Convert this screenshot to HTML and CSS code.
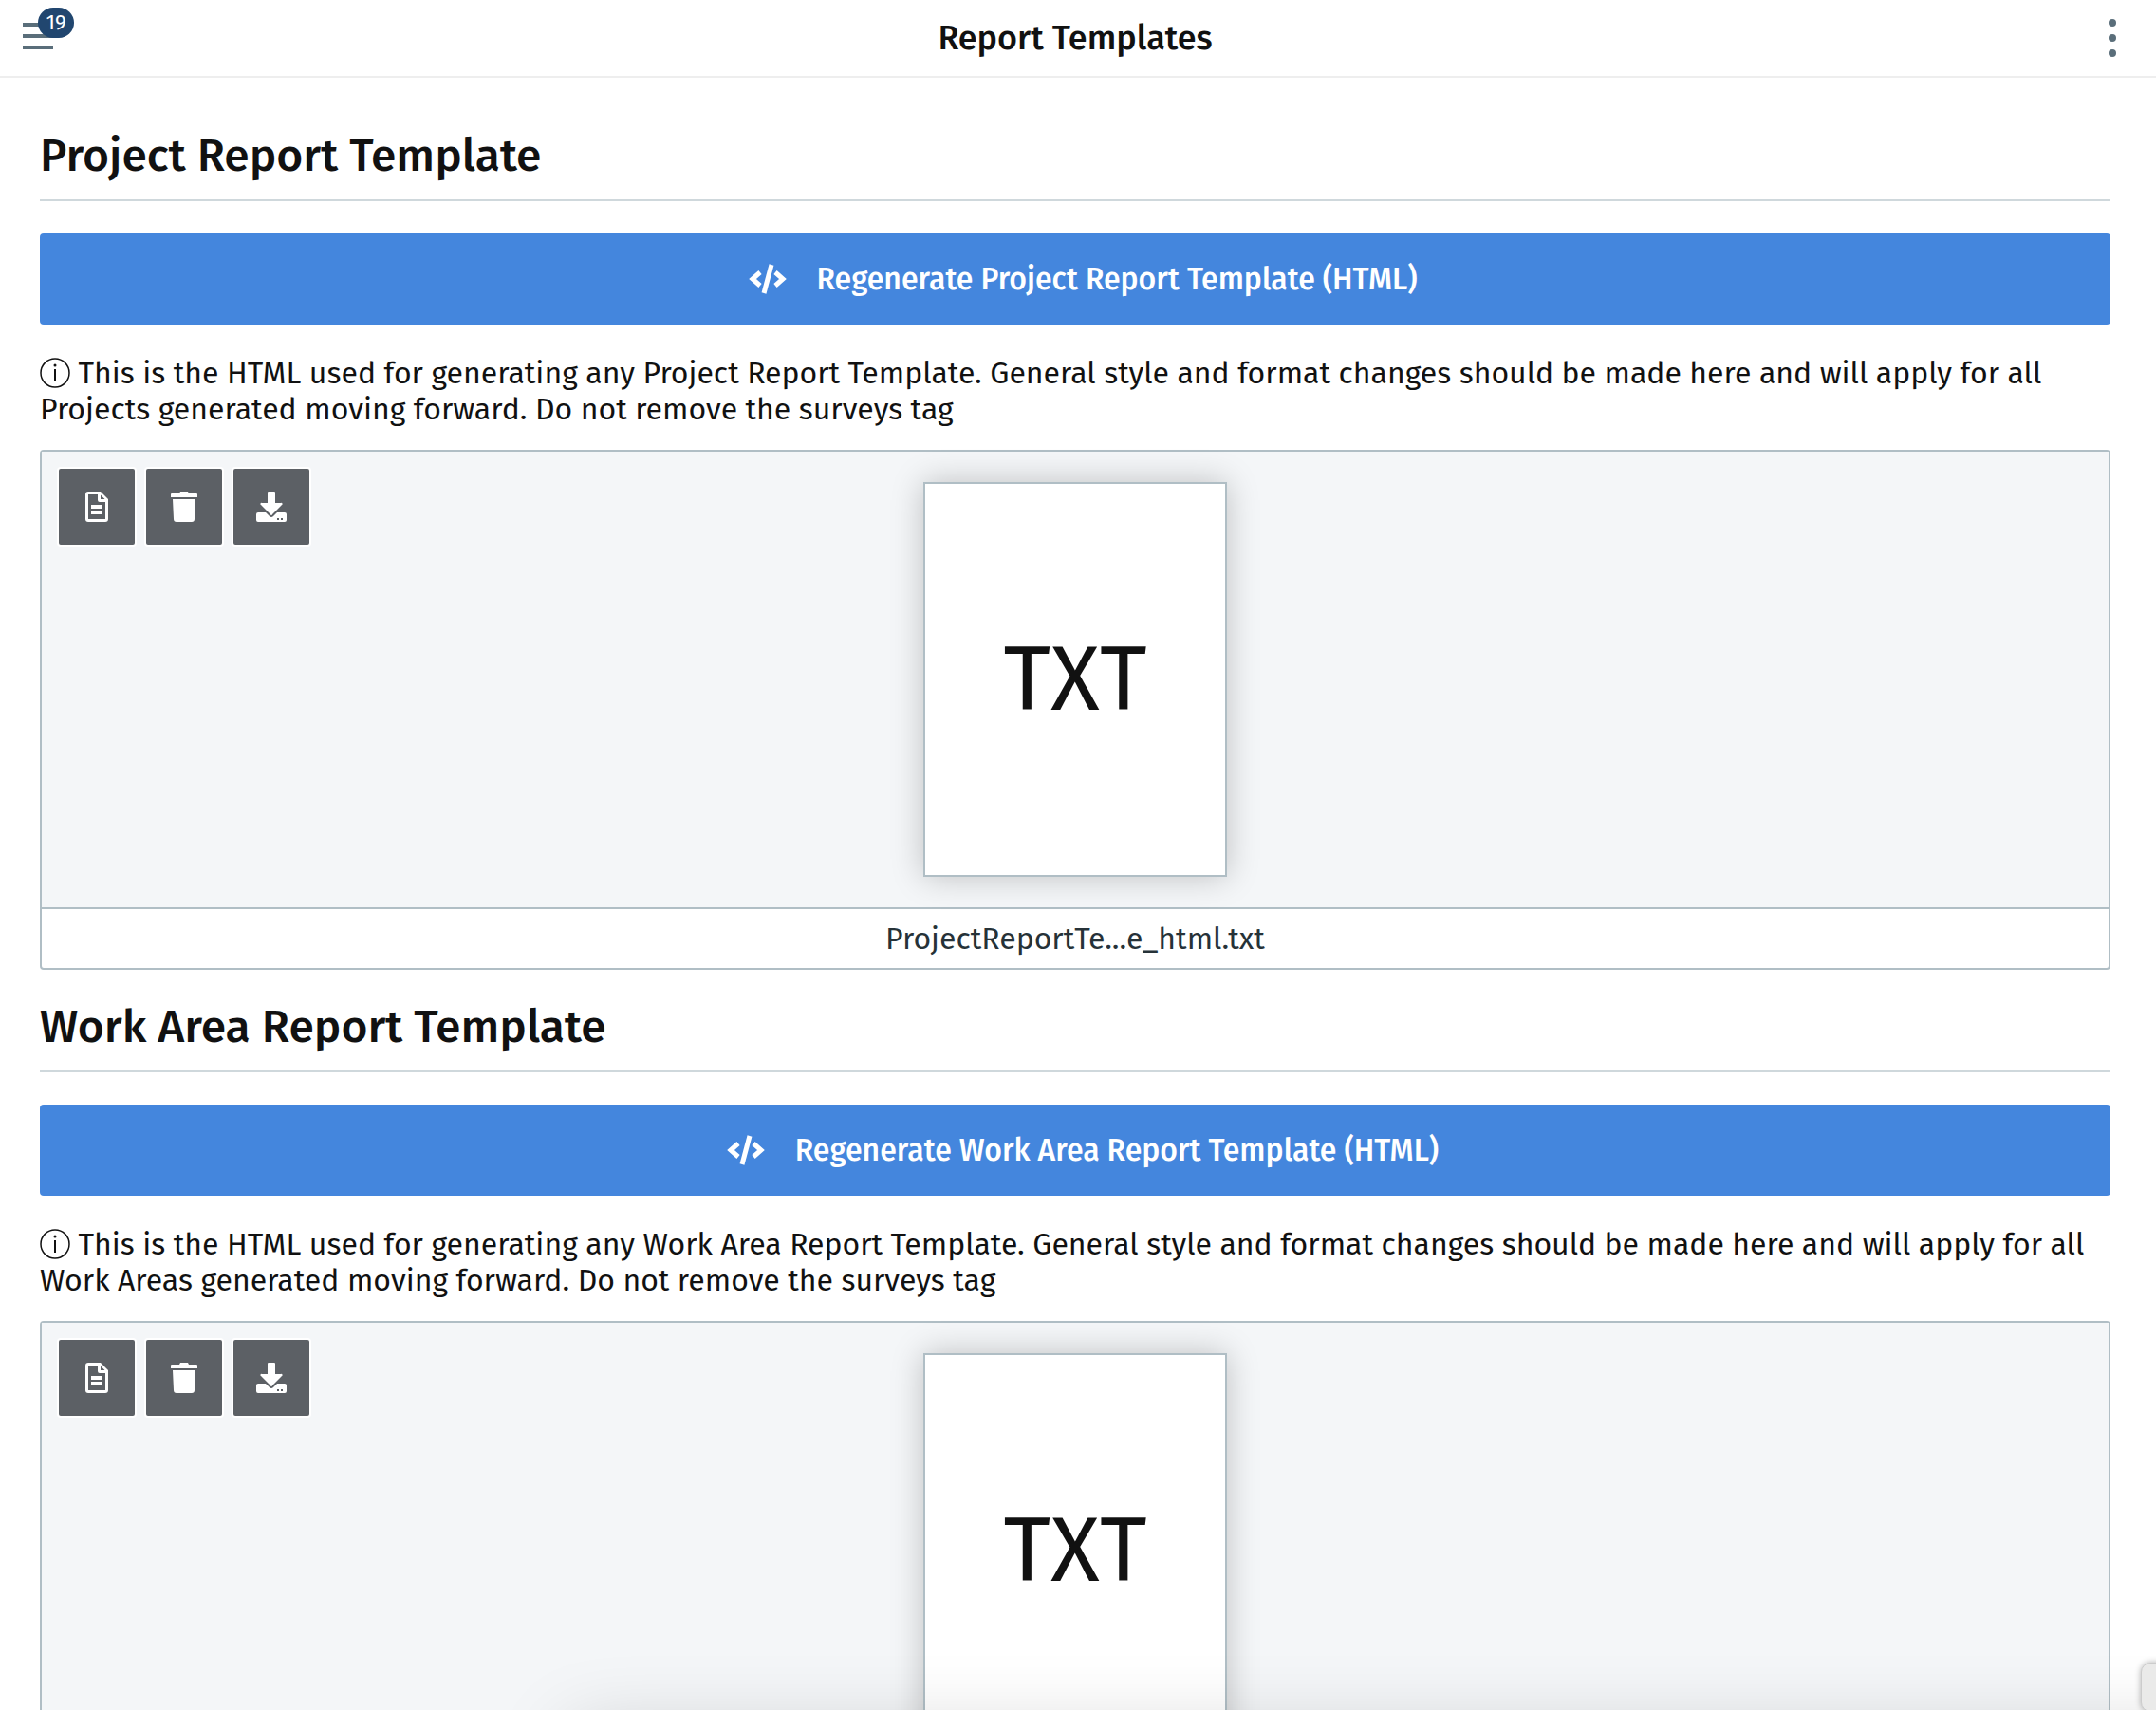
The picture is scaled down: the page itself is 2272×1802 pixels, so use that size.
FILE: index.html
```html
<!DOCTYPE html>
<html lang="en">
	<head>
		<meta charset="utf-8" />
		<title>Report Templates</title>
		<link rel="stylesheet" href="styles.css">
	</head>
	<body>
	<header class="topbar">
		<button class="menu" aria-label="Menu">
			<svg width="32" height="32" viewBox="0 0 32 32"><path d="M0 0h32v4H0zM0 12h32v4H0zM0 24h32v4H0z"/></svg>
			<span class="badge">19</span>
		</button>
		<h1>Report Templates</h1>
		<button class="more" aria-label="More options">
			<svg width="8" height="40" viewBox="0 0 8 40"><circle cx="4" cy="4" r="4"/><circle cx="4" cy="20" r="4"/><circle cx="4" cy="36" r="4"/></svg>
		</button>
	</header>

	<!-- icons shared by both sections -->
	<svg class="sprite" width="0" height="0">
		<symbol id="code" viewBox="0 0 40 32"><path d="M12 9L4 16l8 7M28 9l8 7-8 7" fill="none" stroke="#fff" stroke-width="5"/><path d="M24 1l-8 30" fill="none" stroke="#fff" stroke-width="5"/></symbol>
		<symbol id="doc" viewBox="0 0 24 32"><path d="M3 0h13l8 8v21a3 3 0 0 1-3 3H3a3 3 0 0 1-3-3V3a3 3 0 0 1 3-3zM3 3v26h18V11h-6a2 2 0 0 1-2-2V3zM16 3.500v4.500h4.500zM6 14h12v4H6zM6 20h12v4H6z" fill-rule="evenodd"/></symbol>
		<symbol id="trash" viewBox="0 0 28 32"><path d="M1 2h8l1-2h8l1 2h8a1 1 0 0 1 1 1v3H0V3a1 1 0 0 1 1-1zM2 8h24l-1 21a3 3 0 0 1-3 3H6a3 3 0 0 1-3-3z"/></symbol>
		<symbol id="download" viewBox="0 0 32 32"><path d="M12 1a1 1 0 0 1 1-1h6a1 1 0 0 1 1 1v11h6a1 1 0 0 1 1 2L17 24a1 1 0 0 1-2 0L5 14a1 1 0 0 1 1-2h6zM2 22h8l4 4a3 3 0 0 0 4 0l4-4h8a2 2 0 0 1 2 2v6a2 2 0 0 1-2 2H2a2 2 0 0 1-2-2v-6a2 2 0 0 1 2-2zM22 28v2h2v-2zM26 28v2h2v-2z" fill-rule="evenodd"/></symbol>
		<symbol id="info" viewBox="0 0 64 64"><circle cx="32" cy="32" r="30" fill="none" stroke="#111" stroke-width="3"/><path d="M32 24v26" stroke="#111" stroke-width="4"/><circle cx="32" cy="16" r="3" fill="#111"/></symbol>
	</svg>

	<main class="container">
		<section class="template">
			<h2>Project Report Template</h2>
			<button class="regenerate"><svg width="40" height="32"><use href="#code"/></svg>Regenerate Project Report Template (HTML)</button>
			<p class="info"><svg class="info-icon"><use href="#info"/></svg> This is the HTML used for generating any Project Report Template. General style and format changes should be made here and will apply for all Projects generated moving forward. Do not remove the surveys tag</p>
			<div class="file">
				<div class="preview">
					<div class="tools">
						<button aria-label="View"><svg width="24" height="32"><use href="#doc"/></svg></button>
						<button aria-label="Delete"><svg width="28" height="32"><use href="#trash"/></svg></button>
						<button aria-label="Download"><svg width="32" height="32"><use href="#download"/></svg></button>
					</div>
					<div class="page">TXT</div>
				</div>
				<div class="filename">ProjectReportTe...e_html.txt</div>
			</div>
		</section>

		<section class="template">
			<h2>Work Area Report Template</h2>
			<button class="regenerate"><svg width="40" height="32"><use href="#code"/></svg>Regenerate Work Area Report Template (HTML)</button>
			<p class="info"><svg class="info-icon"><use href="#info"/></svg> This is the HTML used for generating any Work Area Report Template. General style and format changes should be made here and will apply for all Work Areas generated moving forward. Do not remove the surveys tag</p>
			<div class="file">
				<div class="preview">
					<div class="tools">
						<button aria-label="View"><svg width="24" height="32"><use href="#doc"/></svg></button>
						<button aria-label="Delete"><svg width="28" height="32"><use href="#trash"/></svg></button>
						<button aria-label="Download"><svg width="32" height="32"><use href="#download"/></svg></button>
					</div>
					<div class="page">TXT</div>
				</div>
			</div>
		</section>
	</main>
	<div class="bottom-shadow"></div>
	<div class="side-tab"></div>
	</body>
</html>
```
FILE: styles.css
```css
*{
	box-sizing: border-box;
}
body{
	margin: 0;
	height: 100vh;
	overflow: hidden;
	background: #fff;
	color: #111;
	font-family: "Fira Sans", "Noto Sans", sans-serif;
	font-size: 32px;
	line-height: 38px;
}
button{
	border: 0;
	padding: 0;
	font: inherit;
	cursor: pointer;
}
h1, h2{
	margin: 0;
	font-weight: 500;
}
.topbar{
	display: flex;
	align-items: center;
	justify-content: space-between;
	height: 82px;
	padding: 0 42px 0 24px;
	border-bottom: 2px solid #eee;
}
.topbar h1{
	font-size: 36px;
}
.menu, .more{
	display: flex;
	position: relative;
	background: none;
	fill: #5a6e7a;
}
.more{
	justify-content: flex-end;
	width: 20px;
}
.badge{
	position: absolute;
	left: 16px;
	top: -16px;
	width: 38px;
	height: 32px;
	border-radius: 16px;
	background: #21466f;
	color: #fff;
	font-size: 22px;
	line-height: 32px;
	text-align: center;
}
.sprite{
	position: absolute;
}
.container{
	padding: 42px 48px 0 42px;
}
.template{
	margin-bottom: 20px;
}
.template h2{
	padding: 12px 0 18px;
	margin-bottom: 34px;
	border-bottom: 2px solid #cfd8dc;
	font-size: 48px;
	line-height: 56px;
}
.regenerate{
	display: flex;
	align-items: center;
	justify-content: center;
	gap: 32px;
	width: 100%;
	height: 96px;
	padding-left: 16px;
	border-radius: 4px;
	background: #4486dd;
	color: #fff;
	font-weight: 500;
}
.info{
	margin: 32px 0 24px;
}
.info-icon{
	width: 32px;
	height: 32px;
	vertical-align: -5px;
}
.file{
	border: 2px solid #b0bec5;
	border-radius: 4px;
}
.preview{
	display: flex;
	justify-content: center;
	position: relative;
	padding: 32px 0;
	background: #f4f6f8;
}
.tools{
	display: flex;
	gap: 12px;
	position: absolute;
	left: 18px;
	top: 18px;
}
.tools button{
	display: flex;
	align-items: center;
	justify-content: center;
	width: 80px;
	height: 80px;
	border-radius: 2px;
	background: #5c6065;
	box-shadow: 0 0 0 2px #fff;
	fill: #fff;
}
.page{
	display: flex;
	align-items: center;
	justify-content: center;
	width: 320px;
	height: 416px;
	border: 2px solid #b0bec5;
	background: #fff;
	box-shadow: 0 0 32px rgba(0, 0, 0, .22);
	font-size: 96px;
}
.filename{
	padding: 12px 0;
	border-top: 2px solid #b0bec5;
	color: #263238;
	text-align: center;
}
.bottom-shadow{
	position: fixed;
	left: 600px;
	right: -100px;
	bottom: -220px;
	height: 200px;
	box-shadow: 0 0 80px rgba(0, 0, 0, .17);
}
.side-tab{
	position: fixed;
	right: -16px;
	bottom: -2px;
	width: 32px;
	height: 52px;
	border: 1px solid #ccc;
	border-radius: 10px;
	background: #eaeae9;
	box-shadow: 0 0 6px rgba(0, 0, 0, .3);
}
```
